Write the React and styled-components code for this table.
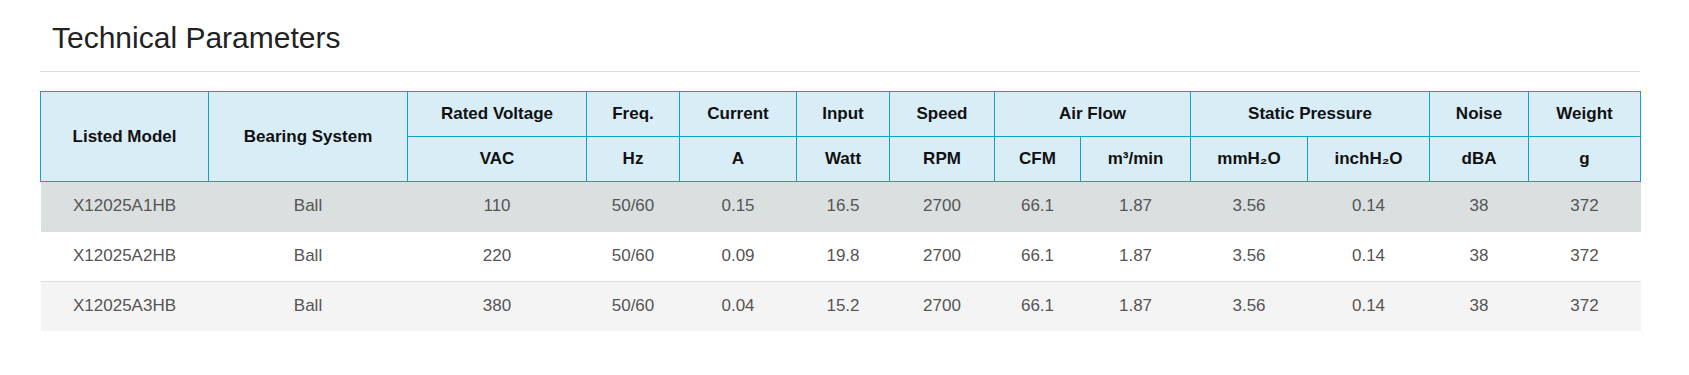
import React from 'react';
import styled, { createGlobalStyle } from 'styled-components';

const GlobalStyle = createGlobalStyle`
  html, body {
    margin: 0;
    padding: 0;
    background: #fff;
  }
  body {
    font-family: "Liberation Sans", Arial, Helvetica, sans-serif;
  }
`;

// column widths measured off the reference
const COLS = [168, 199, 179, 93, 117, 93, 105, 86, 110, 117, 122, 99, 112];

const ROWS = [
  ['X12025A1HB', 'Ball', '110', '50/60', '0.15', '16.5', '2700', '66.1', '1.87', '3.56', '0.14', '38', '372'],
  ['X12025A2HB', 'Ball', '220', '50/60', '0.09', '19.8', '2700', '66.1', '1.87', '3.56', '0.14', '38', '372'],
  ['X12025A3HB', 'Ball', '380', '50/60', '0.04', '15.2', '2700', '66.1', '1.87', '3.56', '0.14', '38', '372'],
];

const UNITS = ['VAC', 'Hz', 'A', 'Watt', 'RPM', 'CFM', 'm³/min', 'mmH₂O', 'inchH₂O', 'dBA', 'g'];

const App = () => {
  return (
    <>
      <GlobalStyle />
      <Wrap>
        <Title>Technical Parameters</Title>
        <Table>
          <colgroup>
            {COLS.map((w, i) => (
              <Col key={i} $w={w} />
            ))}
          </colgroup>
          <thead>
            <tr>
              <Th rowSpan={2}>Listed Model</Th>
              <Th rowSpan={2}>Bearing System</Th>
              <Th>Rated Voltage</Th>
              <Th>Freq.</Th>
              <Th>Current</Th>
              <Th>Input</Th>
              <Th>Speed</Th>
              <Th colSpan={2}>Air Flow</Th>
              <Th colSpan={2}>Static Pressure</Th>
              <Th>Noise</Th>
              <Th>Weight</Th>
            </tr>
            <tr>
              {UNITS.map((u) => (
                <Th key={u}>{u}</Th>
              ))}
            </tr>
          </thead>
          <tbody>
            {ROWS.map((row, i) => (
              <Tr key={row[0]} $tone={i === 0 ? 'hover' : i % 2 === 0 ? 'stripe' : 'plain'}>
                {row.map((v, j) => (
                  <Td key={j}>{v}</Td>
                ))}
              </Tr>
            ))}
          </tbody>
        </Table>
      </Wrap>
    </>
  );
};

export default App;

const Wrap = styled.div`
  width: 1600px;
  margin-left: 40px;
  padding-top: 21px;
`;

const Title = styled.h2`
  margin: 0;
  padding: 0 0 16px 12px;
  font-size: 30px;
  line-height: 34px;
  font-weight: 400;
  color: #222;
  border-bottom: 1px solid #ddd;
`;

const Table = styled.table`
  width: 1600px;
  margin-top: 19px;
  border-collapse: collapse;
  table-layout: fixed;
  font-size: 17px;
  line-height: 20px;
`;

const Col = styled.col`
  width: ${(p) => p.$w}px;
`;

const Th = styled.th`
  padding: 12px 4px;
  background: #d9edf7;
  border: 1px solid #14a0cb;
  color: #111;
  font-weight: 700;
  text-align: center;
  vertical-align: middle;
  white-space: nowrap;
`;

const Tr = styled.tr`
  background: ${(p) =>
    p.$tone === 'hover' ? '#dadfe0' : p.$tone === 'stripe' ? '#f4f4f4' : '#fff'};
`;

const Td = styled.td`
  padding: 14px 4px 15px;
  border-top: 1px solid #dddddd;
  color: #555;
  text-align: center;
  white-space: nowrap;
`;
